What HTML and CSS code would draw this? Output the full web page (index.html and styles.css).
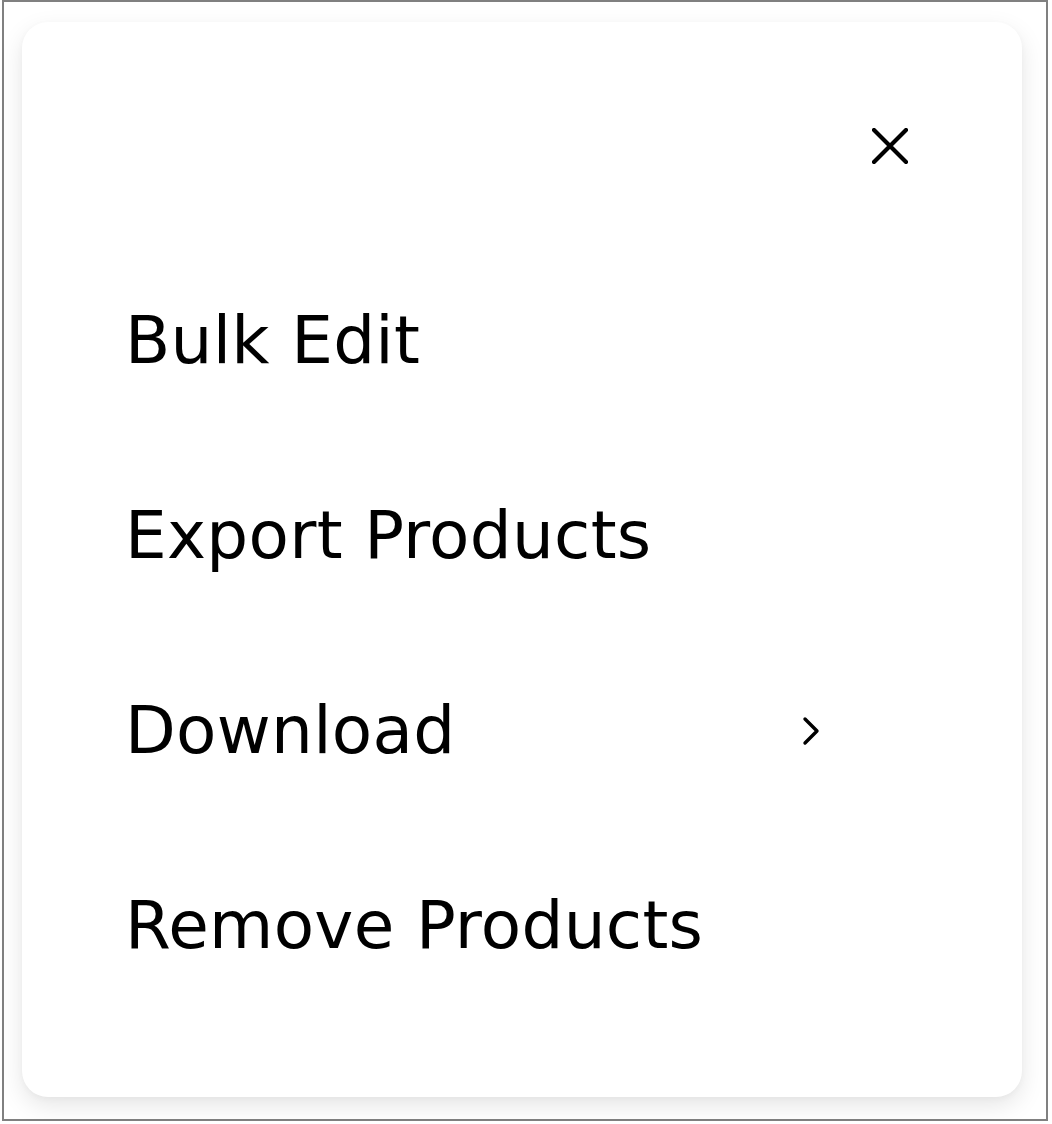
FILE: index.html
```html
<!DOCTYPE html>
<html lang="en">
<head>
<meta charset="utf-8">
<title>Bulk actions</title>
<link rel="stylesheet" href="styles.css">
</head>
<body>
<div class="frame">
  <div class="sheet">
    <div class="sheet-header">
      <button class="close-btn" aria-label="Close">
        <svg viewBox="0 0 36 36" width="36" height="36"><path d="M2 2 L34 34 M34 2 L2 34" stroke="#000" stroke-width="4.2" stroke-linecap="round" fill="none"/></svg>
      </button>
    </div>
    <ul class="menu">
      <li class="menu-item"><span class="label">Bulk Edit</span></li>
      <li class="menu-item"><span class="label">Export Products</span></li>
      <li class="menu-item"><span class="label">Download</span>
        <svg class="chevron" viewBox="0 0 18 30" width="18" height="30"><path d="M3 3 L15 15 L3 27" stroke="#000" stroke-width="3.4" stroke-linecap="round" stroke-linejoin="round" fill="none"/></svg>
      </li>
      <li class="menu-item"><span class="label">Remove Products</span></li>
    </ul>
  </div>
</div>
</body>
</html>
```
FILE: styles.css
```css
* { box-sizing: border-box; }
html, body { margin: 0; padding: 0; background: #fff; }
body { font-family: "DejaVu Sans", "Liberation Sans", sans-serif; color: #000; }

.frame {
  margin-left: 2px;
  width: 1046px;
  height: 1121px;
  border: 2px solid #808080;
  padding: 20px 24px 0 18px;
  background: #fff;
}

.sheet {
  width: 1000px;
  height: 1075px;
  background: #fff;
  border-radius: 26px;
  box-shadow: 0 9px 24px rgba(0, 0, 0, 0.1), 0 2px 6px rgba(0, 0, 0, 0.03);
  padding: 0 0 74px 0;
}

.sheet-header {
  display: flex;
  justify-content: flex-end;
  padding: 88px 96px 0 0;
  margin-bottom: 61px;
}

.close-btn {
  width: 72px;
  height: 72px;
  border: 0;
  background: transparent;
  padding: 0;
  display: flex;
  align-items: center;
  justify-content: center;
  cursor: pointer;
}

.menu {
  list-style: none;
  margin: 0;
  padding: 0 0 0 103px;
}

.menu-item {
  height: 195px;
  display: flex;
  align-items: center;
}

.label {
  font-size: 66px;
  line-height: normal;
  font-weight: 400;
  letter-spacing: 0.3px;
}

.chevron {
  margin-left: auto;
  margin-right: 202px;
}
```
